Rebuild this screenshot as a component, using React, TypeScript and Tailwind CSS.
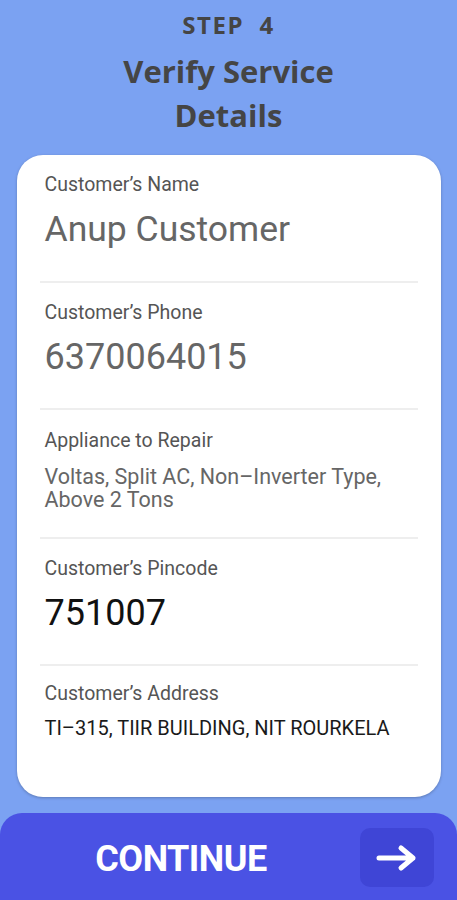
import React from "react";

function Field({
  label,
  children,
  pt,
  pb,
  divider = true,
}: {
  label: string;
  children: React.ReactNode;
  pt: string;
  pb: string;
  divider?: boolean;
}) {
  return (
    <div className="px-[23px]">
      <div className={`px-[5px] ${pt} ${pb}`}>
        <div className="text-[19.5px] leading-[24px] text-[#555555]">{label}</div>
        {children}
      </div>
      {divider && <div className="h-[2px] bg-[#eeeeee]" />}
    </div>
  );
}

export default function App() {
  return (
    <div
      className="w-[457px] h-[900px] bg-[#7ba2f2] overflow-hidden flex flex-col items-center"
      style={{ fontFamily: "Roboto, 'Liberation Sans', sans-serif" }}
    >
      <div
        className="pt-[8px] flex flex-col items-center text-[#454545] font-bold shrink-0"
        style={{ fontFamily: "'Open Sans', 'Noto Sans', sans-serif" }}
      >
        <div className="text-[24px] leading-[34px] tracking-[1.5px] whitespace-pre">STEP  4</div>
        <div className="mt-[7px] text-[31px] leading-[44px] text-center">
          Verify Service
          <br />
          Details
        </div>
      </div>
      <div className="mt-[18px] shrink-0 w-[424px] h-[642px] bg-white rounded-[26px] shadow-[0_1px_3px_rgba(0,0,0,0.25)] flex flex-col">
        <Field label="Customer’s Name" pt="pt-[18px]" pb="pb-[30px]">
          <div className="mt-[10px] text-[35.5px] leading-[44px] text-[#666666]">Anup Customer</div>
        </Field>
        <Field label="Customer’s Phone" pt="pt-[18px]" pb="pb-[29px]">
          <div className="mt-[10px] text-[36px] leading-[44px] text-[#666666]">6370064015</div>
        </Field>
        <Field label="Appliance to Repair" pt="pt-[19px]" pb="pb-[26px]">
          <div className="mt-[12px] text-[21.5px] leading-[23px] text-[#666666]">
            Voltas, Split AC, Non–Inverter Type,
            <br />
            Above 2 Tons
          </div>
        </Field>
        <Field label="Customer’s Pincode" pt="pt-[18px]" pb="pb-[29px]">
          <div className="mt-[10px] text-[36px] leading-[44px] text-[#111111]">751007</div>
        </Field>
        <Field label="Customer’s Address" pt="pt-[16px]" pb="pb-[0px]" divider={false}>
          <div className="mt-[10px] text-[20px] leading-[24px] text-[#1a1a1a]">TI–315, TIIR BUILDING, NIT ROURKELA</div>
        </Field>
      </div>
      <div className="mt-[16px] shrink-0 w-[457px] h-[100px] bg-[#4a52e4] rounded-t-[22px] flex items-start pt-[15px]">
        <div className="flex-1 flex justify-center pt-[11px] pl-[2px]">
          <span className="text-white font-bold text-[36px] leading-[40px] tracking-[-0.5px]">CONTINUE</span>
        </div>
        <div className="mr-[23px] w-[74px] h-[59px] rounded-[10px] bg-[#3f45d6] flex items-center justify-center">
          <svg width="42" height="28" viewBox="0 0 42 28" fill="none">
            <path d="M3 14H37M25 4L37 14L25 24" stroke="white" strokeWidth="5" strokeLinecap="round" strokeLinejoin="round" />
          </svg>
        </div>
      </div>
    </div>
  );
}
